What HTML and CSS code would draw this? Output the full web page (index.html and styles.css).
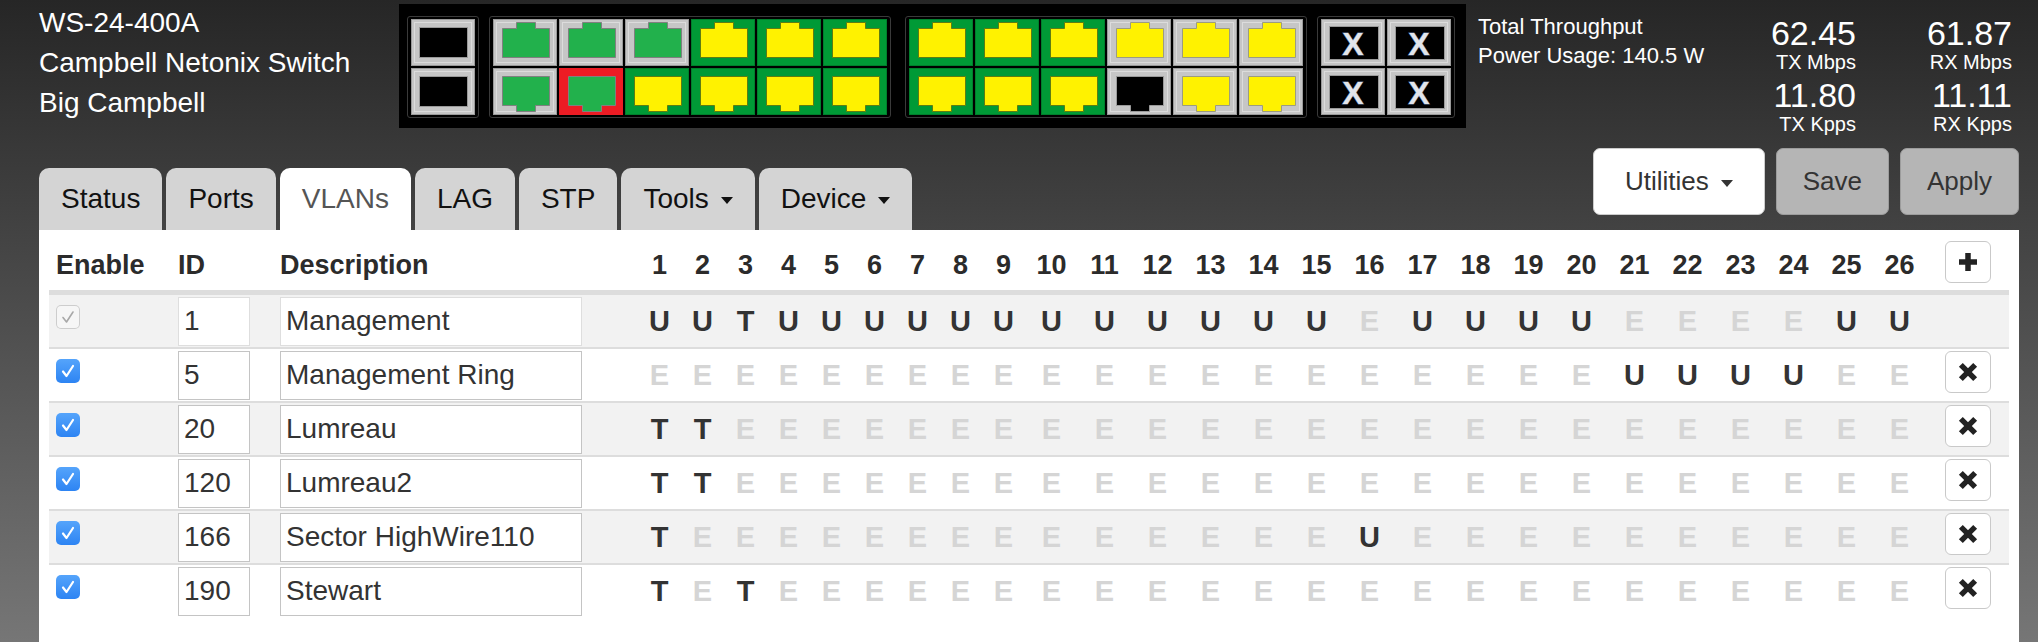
FILE: index.html
```html
<!DOCTYPE html>
<html lang="en">
<head>
    <meta charset="UTF-8">
    <meta name="viewport" content="width=device-width, initial-scale=1.0">
    <title>WS-24-400A - VLANs</title>
    <link rel="stylesheet" href="styles.css">
</head>
<body>
    <svg class="defs" width="0" height="0" aria-hidden="true">
        <defs>
            <path id="jack-up" d="M9.5 9.5H23.5V3.5H42.5V9.5H56.5V38.5H9.5Z"/>
            <path id="jack-down" d="M9.5 8.5H56.5V37.5H42.5V43.5H23.5V37.5H9.5Z"/>
        </defs>
    </svg>

    <header class="top">
        <div class="title">
            <div>WS-24-400A</div>
            <div>Campbell Netonix Switch</div>
            <div>Big Campbell</div>
        </div>

        <div class="ports">
            <div class="group cols-1">
                <svg class="port f-gray" viewBox="0 0 64 47"><rect class="hole" x="8.5" y="8.5" width="48" height="30"/></svg>
                <svg class="port f-gray" viewBox="0 0 64 47"><rect class="hole" x="8.5" y="8.5" width="48" height="30"/></svg>
            </div>
            <div class="group cols-6">
                <svg class="port f-gray j-green" viewBox="0 0 64 47"><use href="#jack-up"/></svg>
                <svg class="port f-gray j-green" viewBox="0 0 64 47"><use href="#jack-up"/></svg>
                <svg class="port f-gray j-green" viewBox="0 0 64 47"><use href="#jack-up"/></svg>
                <svg class="port f-green j-yellow" viewBox="0 0 64 47"><use href="#jack-up"/></svg>
                <svg class="port f-green j-yellow" viewBox="0 0 64 47"><use href="#jack-up"/></svg>
                <svg class="port f-green j-yellow" viewBox="0 0 64 47"><use href="#jack-up"/></svg>
                <svg class="port f-gray j-green" viewBox="0 0 64 47"><use href="#jack-down"/></svg>
                <svg class="port f-red j-green" viewBox="0 0 64 47"><use href="#jack-down"/></svg>
                <svg class="port f-green j-yellow" viewBox="0 0 64 47"><use href="#jack-down"/></svg>
                <svg class="port f-green j-yellow" viewBox="0 0 64 47"><use href="#jack-down"/></svg>
                <svg class="port f-green j-yellow" viewBox="0 0 64 47"><use href="#jack-down"/></svg>
                <svg class="port f-green j-yellow" viewBox="0 0 64 47"><use href="#jack-down"/></svg>
            </div>
            <div class="group cols-6 split">
                <svg class="port f-green j-yellow" viewBox="0 0 64 47"><use href="#jack-up"/></svg>
                <svg class="port f-green j-yellow" viewBox="0 0 64 47"><use href="#jack-up"/></svg>
                <svg class="port f-green j-yellow" viewBox="0 0 64 47"><use href="#jack-up"/></svg>
                <svg class="port f-gray j-yellow" viewBox="0 0 64 47"><use href="#jack-up"/></svg>
                <svg class="port f-gray j-yellow" viewBox="0 0 64 47"><use href="#jack-up"/></svg>
                <svg class="port f-gray j-yellow" viewBox="0 0 64 47"><use href="#jack-up"/></svg>
                <svg class="port f-green j-yellow" viewBox="0 0 64 47"><use href="#jack-down"/></svg>
                <svg class="port f-green j-yellow" viewBox="0 0 64 47"><use href="#jack-down"/></svg>
                <svg class="port f-green j-yellow" viewBox="0 0 64 47"><use href="#jack-down"/></svg>
                <svg class="port f-gray j-black" viewBox="0 0 64 47"><use href="#jack-down"/></svg>
                <svg class="port f-gray j-yellow" viewBox="0 0 64 47"><use href="#jack-down"/></svg>
                <svg class="port f-gray j-yellow" viewBox="0 0 64 47"><use href="#jack-down"/></svg>
            </div>
            <div class="group cols-2">
                <svg class="port f-gray" viewBox="0 0 64 47"><rect class="hole" x="8.5" y="7.5" width="49" height="33"/><text class="xmark" x="32" y="36">X</text></svg>
                <svg class="port f-gray" viewBox="0 0 64 47"><rect class="hole" x="8.5" y="7.5" width="49" height="33"/><text class="xmark" x="32" y="36">X</text></svg>
                <svg class="port f-gray" viewBox="0 0 64 47"><rect class="hole" x="8.5" y="7.5" width="49" height="33"/><text class="xmark" x="32" y="36">X</text></svg>
                <svg class="port f-gray" viewBox="0 0 64 47"><rect class="hole" x="8.5" y="7.5" width="49" height="33"/><text class="xmark" x="32" y="36">X</text></svg>
            </div>
        </div>

        <div class="stats">
            <div class="stats-text">
                <div>Total Throughput</div>
                <div>Power Usage: 140.5 W</div>
            </div>
            <div class="stats-grid">
                <div class="stat"><div class="num">62.45</div><div class="unit">TX Mbps</div></div>
                <div class="stat"><div class="num">61.87</div><div class="unit">RX Mbps</div></div>
                <div class="stat"><div class="num">11.80</div><div class="unit">TX Kpps</div></div>
                <div class="stat"><div class="num">11.11</div><div class="unit">RX Kpps</div></div>
            </div>
        </div>
    </header>

    <nav class="nav">
        <ul class="tabs">
            <li>Status</li>
            <li>Ports</li>
            <li class="active">VLANs</li>
            <li>LAG</li>
            <li>STP</li>
            <li>Tools<span class="caret"></span></li>
            <li>Device<span class="caret"></span></li>
        </ul>
        <div class="actions">
            <button class="btn btn-light">Utilities<span class="caret"></span></button>
            <button class="btn">Save</button>
            <button class="btn">Apply</button>
        </div>
    </nav>

    <main class="panel">
        <table class="vlans">
            <colgroup>
                <col class="c-enable"><col class="c-id"><col class="c-desc">
                <col class="c-p1" span="9"><col class="c-p2" span="17"><col>
            </colgroup>
            <thead>
                <tr>
                    <th class="left first">Enable</th><th class="left">ID</th><th class="left">Description</th>
                    <th>1</th><th>2</th><th>3</th><th>4</th><th>5</th><th>6</th><th>7</th><th>8</th><th>9</th>
                    <th>10</th><th>11</th><th>12</th><th>13</th><th>14</th><th>15</th><th>16</th><th>17</th><th>18</th>
                    <th>19</th><th>20</th><th>21</th><th>22</th><th>23</th><th>24</th><th>25</th><th>26</th>
                    <th class="act"><button class="icon-btn"><svg class="plus" viewBox="0 0 20 20"><path d="M10 1V19M1 10H19"/></svg></button></th>
                </tr>
            </thead>
            <tbody>
                <tr>
                    <td class="left first"><span class="check dim"><svg viewBox="0 0 24 24"><path d="M7 12.5l3.5 4.5 6.5-10"/></svg></span></td>
                    <td class="left"><input class="id ro" type="text" value="1"></td>
                    <td class="left"><input class="desc ro" type="text" value="Management"></td>
                    <td class="on">U</td><td class="on">U</td><td class="on">T</td><td class="on">U</td><td class="on">U</td><td class="on">U</td><td class="on">U</td><td class="on">U</td><td class="on">U</td>
                    <td class="on">U</td><td class="on">U</td><td class="on">U</td><td class="on">U</td><td class="on">U</td><td class="on">U</td><td class="off">E</td><td class="on">U</td><td class="on">U</td>
                    <td class="on">U</td><td class="on">U</td><td class="off">E</td><td class="off">E</td><td class="off">E</td><td class="off">E</td><td class="on">U</td><td class="on">U</td>
                    <td></td>
                </tr>
                <tr>
                    <td class="left first"><span class="check"><svg viewBox="0 0 24 24"><path d="M7 12.5l3.5 4.5 6.5-10"/></svg></span></td>
                    <td class="left"><input class="id" type="text" value="5"></td>
                    <td class="left"><input class="desc" type="text" value="Management Ring"></td>
                    <td class="off">E</td><td class="off">E</td><td class="off">E</td><td class="off">E</td><td class="off">E</td><td class="off">E</td><td class="off">E</td><td class="off">E</td><td class="off">E</td>
                    <td class="off">E</td><td class="off">E</td><td class="off">E</td><td class="off">E</td><td class="off">E</td><td class="off">E</td><td class="off">E</td><td class="off">E</td><td class="off">E</td>
                    <td class="off">E</td><td class="off">E</td><td class="on">U</td><td class="on">U</td><td class="on">U</td><td class="on">U</td><td class="off">E</td><td class="off">E</td>
                    <td class="act"><button class="icon-btn"><svg class="cross" viewBox="0 0 20 20"><path d="M3.5 3.5L16.5 16.5M16.5 3.5L3.5 16.5"/></svg></button></td>
                </tr>
                <tr>
                    <td class="left first"><span class="check"><svg viewBox="0 0 24 24"><path d="M7 12.5l3.5 4.5 6.5-10"/></svg></span></td>
                    <td class="left"><input class="id" type="text" value="20"></td>
                    <td class="left"><input class="desc" type="text" value="Lumreau"></td>
                    <td class="on">T</td><td class="on">T</td><td class="off">E</td><td class="off">E</td><td class="off">E</td><td class="off">E</td><td class="off">E</td><td class="off">E</td><td class="off">E</td>
                    <td class="off">E</td><td class="off">E</td><td class="off">E</td><td class="off">E</td><td class="off">E</td><td class="off">E</td><td class="off">E</td><td class="off">E</td><td class="off">E</td>
                    <td class="off">E</td><td class="off">E</td><td class="off">E</td><td class="off">E</td><td class="off">E</td><td class="off">E</td><td class="off">E</td><td class="off">E</td>
                    <td class="act"><button class="icon-btn"><svg class="cross" viewBox="0 0 20 20"><path d="M3.5 3.5L16.5 16.5M16.5 3.5L3.5 16.5"/></svg></button></td>
                </tr>
                <tr>
                    <td class="left first"><span class="check"><svg viewBox="0 0 24 24"><path d="M7 12.5l3.5 4.5 6.5-10"/></svg></span></td>
                    <td class="left"><input class="id" type="text" value="120"></td>
                    <td class="left"><input class="desc" type="text" value="Lumreau2"></td>
                    <td class="on">T</td><td class="on">T</td><td class="off">E</td><td class="off">E</td><td class="off">E</td><td class="off">E</td><td class="off">E</td><td class="off">E</td><td class="off">E</td>
                    <td class="off">E</td><td class="off">E</td><td class="off">E</td><td class="off">E</td><td class="off">E</td><td class="off">E</td><td class="off">E</td><td class="off">E</td><td class="off">E</td>
                    <td class="off">E</td><td class="off">E</td><td class="off">E</td><td class="off">E</td><td class="off">E</td><td class="off">E</td><td class="off">E</td><td class="off">E</td>
                    <td class="act"><button class="icon-btn"><svg class="cross" viewBox="0 0 20 20"><path d="M3.5 3.5L16.5 16.5M16.5 3.5L3.5 16.5"/></svg></button></td>
                </tr>
                <tr>
                    <td class="left first"><span class="check"><svg viewBox="0 0 24 24"><path d="M7 12.5l3.5 4.5 6.5-10"/></svg></span></td>
                    <td class="left"><input class="id" type="text" value="166"></td>
                    <td class="left"><input class="desc" type="text" value="Sector HighWire110"></td>
                    <td class="on">T</td><td class="off">E</td><td class="off">E</td><td class="off">E</td><td class="off">E</td><td class="off">E</td><td class="off">E</td><td class="off">E</td><td class="off">E</td>
                    <td class="off">E</td><td class="off">E</td><td class="off">E</td><td class="off">E</td><td class="off">E</td><td class="off">E</td><td class="on">U</td><td class="off">E</td><td class="off">E</td>
                    <td class="off">E</td><td class="off">E</td><td class="off">E</td><td class="off">E</td><td class="off">E</td><td class="off">E</td><td class="off">E</td><td class="off">E</td>
                    <td class="act"><button class="icon-btn"><svg class="cross" viewBox="0 0 20 20"><path d="M3.5 3.5L16.5 16.5M16.5 3.5L3.5 16.5"/></svg></button></td>
                </tr>
                <tr>
                    <td class="left first"><span class="check"><svg viewBox="0 0 24 24"><path d="M7 12.5l3.5 4.5 6.5-10"/></svg></span></td>
                    <td class="left"><input class="id" type="text" value="190"></td>
                    <td class="left"><input class="desc" type="text" value="Stewart"></td>
                    <td class="on">T</td><td class="off">E</td><td class="on">T</td><td class="off">E</td><td class="off">E</td><td class="off">E</td><td class="off">E</td><td class="off">E</td><td class="off">E</td>
                    <td class="off">E</td><td class="off">E</td><td class="off">E</td><td class="off">E</td><td class="off">E</td><td class="off">E</td><td class="off">E</td><td class="off">E</td><td class="off">E</td>
                    <td class="off">E</td><td class="off">E</td><td class="off">E</td><td class="off">E</td><td class="off">E</td><td class="off">E</td><td class="off">E</td><td class="off">E</td>
                    <td class="act"><button class="icon-btn"><svg class="cross" viewBox="0 0 20 20"><path d="M3.5 3.5L16.5 16.5M16.5 3.5L3.5 16.5"/></svg></button></td>
                </tr>
            </tbody>
        </table>
    </main>
</body>
</html>
```

FILE: styles.css
```css
html {
    height: 100%;
    background: linear-gradient(#262626, #767676);
}
body {
    height: 642px;
    box-sizing: border-box;
    margin: 0;
    padding: 0 19px 0 39px;
    overflow: hidden;
    font-family: "Liberation Sans", Arial, sans-serif;
    color: #fff;
}
.defs {
    position: absolute;
    width: 0;
    height: 0;
}

/* header */
.top {
    display: flex;
    height: 148px;
}
.title {
    flex: none;
    width: 360px;
    padding-top: 3px;
    font-size: 28px;
    line-height: 40px;
}
.ports {
    display: flex;
    align-self: flex-start;
    gap: 10px;
    margin-top: 4px;
    padding: 12px 11px 10px 8px;
    background: #000;
}
.group {
    display: grid;
    align-self: flex-start;
    gap: 2px;
    padding: 2px 3px;
    border: 1px solid #3a3a3a;
    border-radius: 3px;
}
.group.split {
    margin-left: 4px;
}
.cols-1 { grid-template-columns: 64px; }
.cols-2 { grid-template-columns: repeat(2, 64px); }
.cols-6 { grid-template-columns: repeat(6, 64px); }
.port {
    display: block;
    width: 64px;
    height: 47px;
}
.f-gray {
    background: #c6c6c6;
    box-shadow: inset 0 0 0 1px #9a9a9a, inset 0 0 0 3px #c6c6c6, inset 0 0 0 4px #dcdcdc;
}
.f-green {
    background: #009a36;
    box-shadow: inset 0 0 0 1px #007f2c;
}
.f-red {
    background: #ec1c24;
}
.port use {
    stroke-width: 1;
}
.j-green use { fill: #22b14c; stroke: #808080; }
.j-yellow use { fill: #fff200; stroke: #5e7d12; }
.f-gray.j-yellow use { stroke: #9c9c80; }
.j-black use { fill: #000; stroke: #9a9a9a; }
.hole {
    fill: #000;
    stroke: #9a9a9a;
    stroke-width: 1;
}
.xmark {
    font: bold 32px "Liberation Sans", Arial, sans-serif;
    fill: #e2e5eb;
    stroke: #5b6f92;
    stroke-width: 1;
    paint-order: stroke;
    text-anchor: middle;
}

.stats {
    display: flex;
    margin-left: 12px;
}
.stats-text {
    width: 222px;
    padding-top: 12px;
    font-size: 22px;
    line-height: 29px;
    white-space: nowrap;
}
.stats-grid {
    display: grid;
    grid-template-columns: 156px 156px;
    align-content: start;
    padding-top: 16px;
    text-align: right;
}
.stat {
    margin-bottom: 4px;
}
.num {
    font-size: 34px;
    line-height: 34px;
}
.unit {
    font-size: 20px;
    line-height: 24px;
}

/* tabs + buttons */
.nav {
    display: flex;
    justify-content: space-between;
    align-items: flex-end;
    height: 82px;
}
.tabs {
    display: flex;
    gap: 4px;
    margin: 0;
    padding: 0;
    list-style: none;
}
.tabs li {
    padding: 17px 22px;
    border-radius: 10px 10px 0 0;
    background: #d4d4d4;
    color: #111;
    font-size: 28px;
    line-height: 28px;
}
.tabs li.active {
    background: #fff;
    color: #555;
}
.caret {
    display: inline-block;
    width: 0;
    height: 0;
    margin-left: 12px;
    vertical-align: middle;
    border-left: 6px solid transparent;
    border-right: 6px solid transparent;
    border-top: 7px solid currentColor;
}
.actions {
    display: flex;
    align-self: flex-start;
    gap: 11px;
}
.btn {
    height: 67px;
    padding: 0 26px;
    border: 1px solid #9c9c9c;
    border-radius: 7px;
    background: #b5b5b5;
    color: #333;
    font: 26px "Liberation Sans", Arial, sans-serif;
}
.btn-light {
    padding: 0 31px;
    border-color: #ccc;
    background: #fff;
}

/* vlan table */
.panel {
    height: 412px;
    box-sizing: border-box;
    padding: 11px 10px 0;
    background: #fff;
    color: #333;
}
.vlans {
    width: 100%;
    table-layout: fixed;
    border-spacing: 0;
}
.c-enable { width: 117px; }
.c-id { width: 102px; }
.c-desc { width: 370px; }
.c-p1 { width: 43px; }
.c-p2 { width: 53px; }
.vlans th {
    height: 48px;
    padding: 0 11.5px;
    border-bottom: 5px solid #ddd;
    color: #2b2b2b;
    font-size: 27px;
    text-align: center;
}
.vlans td {
    height: 52px;
    padding: 0 11px;
    font-size: 29px;
    font-weight: bold;
    text-align: center;
}
.vlans .left {
    padding-left: 12px;
    text-align: left;
}
.vlans .first {
    padding-left: 7px;
}
.vlans .act {
    padding: 0;
}
.vlans tbody tr:nth-child(odd) td {
    background: #f2f2f2;
}
.vlans tbody tr + tr td {
    border-top: 2px solid #ddd;
}
.on { color: #333; }
.off { color: #d5d5d5; }

.vlans input {
    display: block;
    box-sizing: border-box;
    height: 49px;
    padding: 0 5px;
    border: 1px solid #c4c4c4;
    border-radius: 0;
    background: #fff;
    color: #333;
    font: 28px "Liberation Sans", Arial, sans-serif;
}
.vlans input.ro {
    border-color: #dedede;
}
.id { width: 72px; }
.desc { width: 302px; }

.check {
    display: block;
    width: 24px;
    height: 24px;
    margin-bottom: 8px;
    border-radius: 5px;
    background: linear-gradient(#55a4fb, #2d84f3);
}
.check svg {
    display: block;
    width: 24px;
    height: 24px;
    fill: none;
    stroke: #fff;
    stroke-width: 2.2;
    stroke-linecap: round;
    stroke-linejoin: round;
}
.check.dim {
    background: #f6f6f6;
    box-shadow: inset 0 0 0 1px #cdcdcd;
}
.check.dim svg {
    stroke: #a8a8a8;
    stroke-width: 1.6;
}

.icon-btn {
    display: block;
    width: 46px;
    height: 42px;
    margin: 0 auto 7px;
    padding: 0;
    border: 1.5px solid #c9c9c9;
    border-radius: 6px;
    background: #fff;
}
.icon-btn svg {
    display: block;
    width: 20px;
    height: 20px;
    margin: auto;
    fill: none;
    stroke: #222;
}
.plus { stroke-width: 5.5; }
.icon-btn .cross {
    width: 22px;
    height: 22px;
    stroke-width: 5;
}
```
